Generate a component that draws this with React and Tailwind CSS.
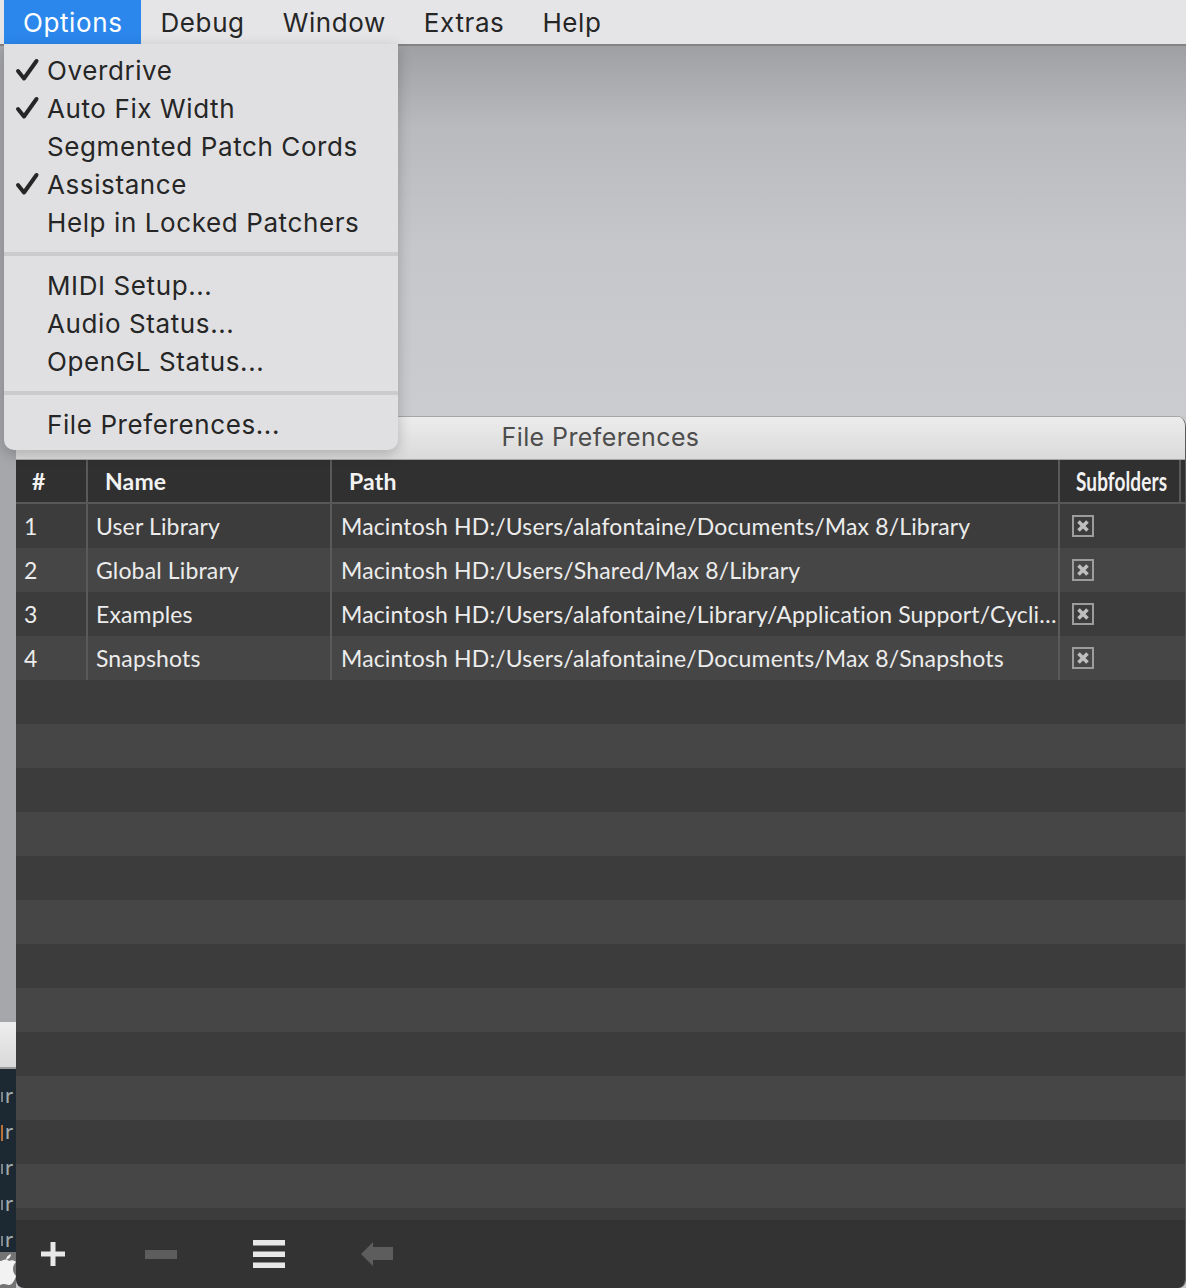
import React from "react";

const menuItems = [
  { label: "Overdrive", checked: true },
  { label: "Auto Fix Width", checked: true },
  { label: "Segmented Patch Cords", checked: false },
  { label: "Assistance", checked: true },
  { label: "Help in Locked Patchers", checked: false },
];

const rows = [
  { n: "1", name: "User Library", path: "Macintosh HD:/Users/alafontaine/Documents/Max 8/Library" },
  { n: "2", name: "Global Library", path: "Macintosh HD:/Users/Shared/Max 8/Library" },
  { n: "3", name: "Examples", path: "Macintosh HD:/Users/alafontaine/Library/Application Support/Cycli…" },
  { n: "4", name: "Snapshots", path: "Macintosh HD:/Users/alafontaine/Documents/Max 8/Snapshots" },
];

const Check = () => (
  <svg width="26" height="24" viewBox="0 0 26 24" className="absolute left-[10px] top-[7px]">
    <path d="M4 13 L10 20.5 L22.5 3" fill="none" stroke="#262626" strokeWidth="4" strokeLinecap="round" strokeLinejoin="round" />
  </svg>
);

const MenuRow = ({ label, checked }) => (
  <div className="relative h-[38px] flex items-center pl-[43px]">
    {checked && <Check />}
    <span>{label}</span>
  </div>
);

const Separator = () => (
  <div className="h-[25px] flex items-center">
    <div className="w-full h-[4px] bg-[#cbcbcd]" />
  </div>
);

const Dropdown = () => (
  <div className="absolute left-[4px] top-[44px] w-[394px] h-[406px] pt-[7px] bg-[#e0e0e2] rounded-b-[10px] shadow-[0_4px_14px_rgba(0,0,0,0.22)] font-[Inter,sans-serif] text-[26px] tracking-[0.6px] text-[#262626]">
    {menuItems.map((m) => (
      <MenuRow key={m.label} {...m} />
    ))}
    <Separator />
    <MenuRow label="MIDI Setup..." />
    <MenuRow label="Audio Status..." />
    <MenuRow label="OpenGL Status..." />
    <Separator />
    <MenuRow label="File Preferences..." />
  </div>
);

const MenuBar = () => (
  <div className="flex h-[46px] pl-[4px] bg-[#e5e5e7] border-b-2 border-[#838386] font-[Inter,sans-serif] text-[26px] tracking-[0.6px] text-[#262626]">
    <div className="px-[19px] flex items-center bg-[#2b87ec] text-white">Options</div>
    <div className="px-[19px] flex items-center">Debug</div>
    <div className="px-[19px] flex items-center">Window</div>
    <div className="px-[19px] flex items-center">Extras</div>
    <div className="px-[19px] flex items-center">Help</div>
  </div>
);

const LeftStrip = () => (
  <div className="w-[16px] flex flex-col">
    <div className="h-[976px] bg-[#a6a7ab]" />
    <div className="h-[47px] bg-[linear-gradient(180deg,#eeeeee,#d9d9d9)] border-b-2 border-[#9a9a9a]" />
    <div className="h-[183px] bg-[#1c2932] overflow-hidden pt-[8px] font-[Lato,sans-serif] text-[22px] text-[#a3a9ad]">
      {[0, 1, 2, 3, 4].map((i) => (
        <div key={i} className="h-[36px] flex items-center gap-[2px] pl-[1px]">
          <div className={`w-[2px] h-[10px] mt-[4px] ${i === 1 ? "bg-[#b8733c] h-[16px] mt-0" : "bg-[#7d858a]"}`} />
          <span className="leading-none">r</span>
        </div>
      ))}
    </div>
    <div className="h-[36px] bg-[#747474] overflow-hidden relative">
      <svg width="30" height="36" viewBox="0 0 30 36" className="absolute left-[-14px] top-0">
        <path d="M15 9c3-2 6-2 8 0 2-1 5-1 7 1-2 2-3 4-3 7 0 3 2 6 3 7-1 4-4 9-7 9-2 0-3-1-5-1s-3 1-5 1c-3 0-8-7-8-13 0-7 5-11 10-11z" fill="#f2f2f2" />
        <path d="M20 8c0-3 2-5 5-6 0 3-2 5-5 6z" fill="#f2f2f2" />
      </svg>
    </div>
  </div>
);

const CheckBox = () => (
  <div className="w-[22px] h-[22px] ml-[12px] border-2 border-[#9c9c9c] flex items-center justify-center">
    <svg width="14" height="14" viewBox="0 0 14 14">
      <path d="M2.5 2.5 L11.5 11.5 M11.5 2.5 L2.5 11.5" stroke="#bfbfbf" strokeWidth="3.6" />
    </svg>
  </div>
);

const HeaderRow = () => (
  <div className="flex h-[44px] bg-[#303030] border-b-2 border-[#585858] font-[Lato,sans-serif] font-bold text-[23px] tracking-[0.15px] text-[#f2f2f2]">
    <div className="w-[72px] border-r-2 border-[#5a5a5a] pl-[16px] flex items-center">#</div>
    <div className="w-[244px] border-r-2 border-[#5a5a5a] pl-[17px] flex items-center">Name</div>
    <div className="w-[728px] border-r-2 border-[#5a5a5a] pl-[17px] flex items-center">Path</div>
    <div className="w-[121px] border-r-2 border-[#5a5a5a] pl-[16px] flex items-center overflow-hidden">
      <span className="text-[26px] scale-x-[0.73] origin-left whitespace-nowrap">Subfolders</span>
    </div>
    <div className="flex-1" />
  </div>
);

const DataRow = ({ n, name, path, i }) => (
  <div className={`flex h-[44px] font-[Lato,sans-serif] text-[23px] tracking-[0.15px] text-[#ececec] ${i % 2 === 0 ? "bg-[#3c3c3c]" : "bg-[#464646]"}`}>
    <div className="w-[72px] border-r-2 border-[#5a5a5a] pl-[8px] flex items-center">{n}</div>
    <div className="w-[244px] border-r-2 border-[#5a5a5a] pl-[8px] flex items-center">{name}</div>
    <div className="w-[728px] border-r-2 border-[#5a5a5a] pl-[9px] flex items-center whitespace-nowrap overflow-hidden">{path}</div>
    <div className="w-[121px] flex items-center">
      <CheckBox />
    </div>
    <div className="flex-1" />
  </div>
);

const Toolbar = () => (
  <div className="h-[68px] bg-[#333333] flex items-center pl-[21px] gap-[76px]">
    <div className="w-[32px] flex justify-center">
      <svg width="24" height="24" viewBox="0 0 24 24">
        <path d="M9.5 0h5v24h-5z M0 9.5h24v5h-24z" fill="#e8e8e8" />
      </svg>
    </div>
    <div className="w-[32px] flex justify-center">
      <svg width="32" height="9" viewBox="0 0 32 9">
        <rect width="32" height="9" fill="#5d5d5d" />
      </svg>
    </div>
    <div className="w-[32px] flex justify-center">
      <svg width="32" height="28" viewBox="0 0 32 28">
        <rect y="0" width="32" height="5.5" fill="#e8e8e8" />
        <rect y="11.5" width="32" height="5.5" fill="#e8e8e8" />
        <rect y="22.5" width="32" height="5.5" fill="#e8e8e8" />
      </svg>
    </div>
    <div className="w-[32px] flex justify-center">
      <svg width="32" height="24" viewBox="0 0 32 24">
        <path d="M0 12 L12 0 V5 H32 V18 H12 V24 Z" fill="#5d5d5d" />
      </svg>
    </div>
  </div>
);

const PrefsWindow = () => (
  <div className="h-[872px] flex flex-col rounded-tr-[10px] rounded-b-[8px] overflow-hidden border-r border-[#5a5a5a]">
    <div className="h-[44px] flex items-center justify-center bg-[linear-gradient(180deg,#ececec,#dadada)] border-t border-[#a3a3a6] border-b border-[#a6a6a6] font-[Inter,sans-serif] text-[25px] tracking-[0.4px] text-[#4d4d4d]">
      File Preferences
    </div>
    <HeaderRow />
    {rows.map((r, i) => (
      <DataRow key={r.n} {...r} i={i} />
    ))}
    <div className="flex-1 overflow-hidden flex flex-col">
      {Array.from({ length: 13 }).map((_, i) => (
        <div key={i} className={`h-[44px] shrink-0 ${i % 2 === 0 ? "bg-[#3c3c3c]" : "bg-[#464646]"}`} />
      ))}
    </div>
    <Toolbar />
  </div>
);

export default function App() {
  return (
    <div className="relative w-[1186px] h-[1288px] overflow-hidden bg-[#c6c7cb]">
      <MenuBar />
      <div className="flex h-[1242px]">
        <LeftStrip />
        <div className="flex-1 flex flex-col">
          <div className="h-[370px] bg-[linear-gradient(180deg,#9fa0a4_0%,#b9babe_22%,#c6c7cb_55%,#cbccd0_100%)]" />
          <PrefsWindow />
        </div>
      </div>
      <Dropdown />
    </div>
  );
}
